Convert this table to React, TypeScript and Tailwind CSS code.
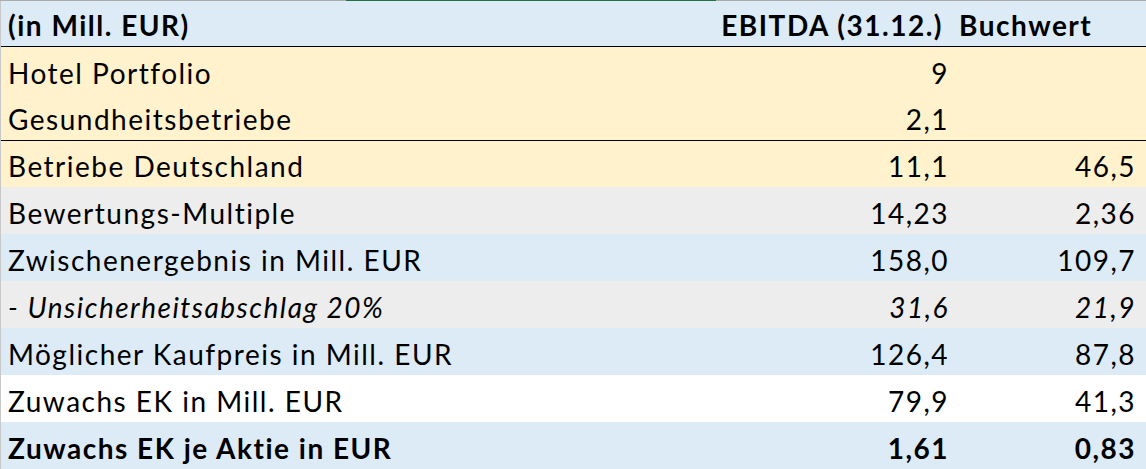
import React from 'react';

type Row = {
  label: string;
  ebitda: string;
  buch: string;
  bg: string;
  bold?: boolean;
  italic?: boolean;
  borderBottom?: boolean;
  h: string;
};

const rows: Row[] = [
  { label: 'Hotel Portfolio', ebitda: '9', buch: '', bg: 'bg-[#fff2cc]', h: 'h-[47px]' },
  { label: 'Gesundheitsbetriebe', ebitda: '2,1', buch: '', bg: 'bg-[#fff2cc]', h: 'h-[47px]', borderBottom: true },
  { label: 'Betriebe Deutschland', ebitda: '11,1', buch: '46,5', bg: 'bg-[#fff2cc]', h: 'h-[46px]' },
  { label: 'Bewertungs-Multiple', ebitda: '14,23', buch: '2,36', bg: 'bg-[#ededed]', h: 'h-[47px]' },
  { label: 'Zwischenergebnis in Mill. EUR', ebitda: '158,0', buch: '109,7', bg: 'bg-[#ddebf7]', h: 'h-[47px]' },
  { label: '- Unsicherheitsabschlag 20%', ebitda: '31,6', buch: '21,9', bg: 'bg-[#ededed]', h: 'h-[47px]', italic: true },
  { label: 'Möglicher Kaufpreis in Mill. EUR', ebitda: '126,4', buch: '87,8', bg: 'bg-[#ddebf7]', h: 'h-[47px]' },
  { label: 'Zuwachs EK in Mill. EUR', ebitda: '79,9', buch: '41,3', bg: 'bg-white', h: 'h-[47px]' },
  { label: 'Zuwachs EK je Aktie in EUR', ebitda: '1,61', buch: '0,83', bg: 'bg-[#ddebf7]', h: 'h-[47px]', bold: true },
];

export default function App() {
  return (
    <div className="w-[1146px] h-[469px] overflow-hidden bg-white text-black font-['Lato',sans-serif] text-[28px] tracking-[1.5px] leading-none">
      {/* top gridline with selected column marker */}
      <div className="flex h-px">
        <div className="w-[346px] bg-[#ababab]" />
        <div className="w-[370px] bg-[#217346]" />
        <div className="flex-1 bg-[#ababab]" />
      </div>
      <div className="border-l border-[#c8c8c8]">
        <div className="grid grid-cols-[1fr_230px_195px] h-[46px] pt-[3px] items-center bg-[#ddebf7] border-b border-black font-bold">
          <div className="pl-[7px] whitespace-nowrap">(in Mill. EUR)</div>
          <div className="text-right pr-[8px] whitespace-nowrap">EBITDA (31.12.)</div>
          <div className="pl-[8px]">Buchwert</div>
        </div>
        {rows.map((r) => (
          <div
            key={r.label}
            className={`grid grid-cols-[1fr_230px_195px] items-center pt-[4px] ${r.h} ${r.bg} ${r.borderBottom ? 'border-b border-black' : ''} ${r.bold ? 'font-bold' : ''} ${r.italic ? 'italic' : ''}`}
          >
            <div className="pl-[7px] whitespace-nowrap">{r.label}</div>
            <div className="text-right pr-[2px]">{r.ebitda}</div>
            <div className="text-right pr-[10px]">{r.buch}</div>
          </div>
        ))}
      </div>
    </div>
  );
}
